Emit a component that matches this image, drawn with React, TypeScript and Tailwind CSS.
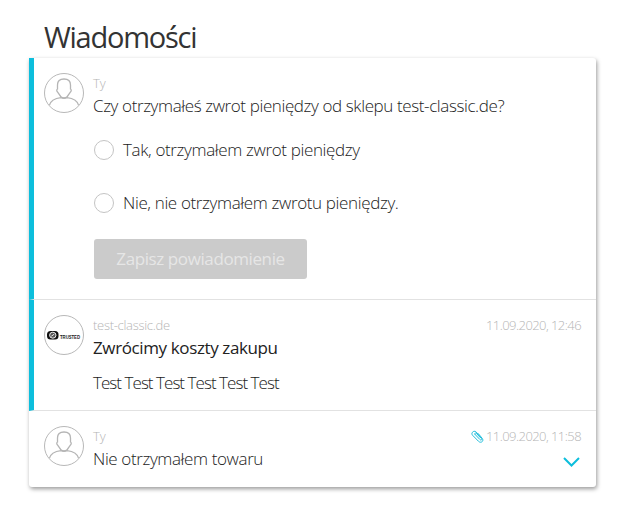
import type { ReactNode } from "react";
import { clsx } from "clsx";

interface MessageProps {
  avatar: ReactNode;
  children: ReactNode;
  active?: boolean;
  className?: string;
}

function Avatar({ children }: { children: ReactNode }) {
  return (
    <div className="flex h-10 w-10 shrink-0 items-center justify-center overflow-hidden rounded-full border border-[#b8b8b8]">
      {children}
    </div>
  );
}

function UserAvatar() {
  return (
    <Avatar>
      <svg width="38" height="38" viewBox="0 0 38 38" fill="none" stroke="#b5b5b5" strokeWidth="1.300" className="shrink-0">
        <path d="M19 5c-4.800 0-6.500 2-6.500 6v4c-1 .5-.9 2-.2 2.700l3.400 4.800c1.800 2 4.800 2 6.600 0l3.400-4.800c.7-.7.8-2.200-.2-2.700v-4c0-4-1.700-6-6.500-6z" />
        <path d="M4.300 31.500c1.200-4.800 5-7.200 11.700-7.900 2 .9 4 .9 6 0 6.700.7 10.500 3.100 11.700 7.900" />
      </svg>
    </Avatar>
  );
}

function ShopAvatar() {
  return (
    <Avatar>
      <svg width="38" height="38" viewBox="0 0 38 38" className="shrink-0">
        <rect x="2" y="15" width="11.500" height="8.500" rx="3.500" fill="#111" />
        <ellipse cx="7.800" cy="19.200" rx="3.200" ry="3" fill="#555" stroke="#fff" strokeWidth="0.900" />
        <path d="M6.300 20.200l2.900-2" stroke="#fff" strokeWidth="0.900" />
        <text x="15" y="22.800" textLength="20" lengthAdjust="spacingAndGlyphs" fontSize="4.600" fontWeight="700" fontFamily="Liberation Sans, sans-serif" fill="#222">
          TRUSTED
        </text>
      </svg>
    </Avatar>
  );
}

function Message({ avatar, children, active, className }: MessageProps) {
  return (
    <div
      className={clsx(
        "flex border-l-[5px] pt-[15px] pr-[15px] pl-[10px]",
        active ? "border-l-[#0dbedc]" : "border-l-transparent",
        className
      )}
    >
      {avatar}
      <div className="ml-[9px] min-w-0 flex-1">{children}</div>
    </div>
  );
}

function Option({ label }: { label: string }) {
  return (
    <label className="flex h-5 items-center gap-[9px]">
      <span className="h-5 w-5 rounded-full border border-[#c4c4c4]" />
      <span className="whitespace-nowrap text-[17px] leading-5 tracking-[-0.360px]">{label}</span>
    </label>
  );
}

export default function App() {
  return (
    <div className="h-[525px] w-[617px] overflow-hidden bg-white pt-[18px] pl-[29px] font-['Open_Sans','Noto_Sans',sans-serif] font-light text-[#222]">
      <h1 className="ml-[15px] h-10 whitespace-nowrap text-[29px] leading-[38px] font-normal tracking-[-1.250px] text-[#333]">
        Wiadomości
      </h1>

      <div className="h-[429px] w-[567px] overflow-hidden rounded-[3px] rounded-tl-none shadow-[1px_2px_4px_rgba(0,0,0,0.4)]">
        {/* Refund question */}
        <Message avatar={<UserAvatar />} active className="h-[242px] border-b border-b-[#e2e2e2]">
          <div className="h-[22px] text-[13px] leading-5 text-[#b5b5b5]">Ty</div>
          <p className="whitespace-nowrap text-[17px] leading-[22px] tracking-[-0.390px]">
            Czy otrzymałeś zwrot pieniędzy od sklepu test-classic.de?
          </p>
          <div className="mt-[23px] ml-px flex flex-col gap-[33px]">
            <Option label="Tak, otrzymałem zwrot pieniędzy" />
            <Option label="Nie, nie otrzymałem zwrotu pieniędzy." />
          </div>
          <button className="mt-[26px] ml-px h-10 w-[213px] rounded-[3px] bg-[#cbcbcb] text-[17px] leading-10 font-medium tracking-[-0.400px] whitespace-nowrap text-[#e6e6e6]">
            Zapisz powiadomienie
          </button>
        </Message>

        {/* Shop reply */}
        <Message avatar={<ShopAvatar />} active className="h-[111px] border-b border-b-[#e2e2e2]">
          <div className="flex h-[22px] justify-between text-[13px] leading-5 whitespace-nowrap text-[#b5b5b5]">
            <span className="tracking-[-0.300px]">test-classic.de</span>
            <span className="tracking-[-0.560px]">11.09.2020, 12:46</span>
          </div>
          <h2 className="text-[17px] leading-[22px] font-normal tracking-[-0.380px]">Zwrócimy koszty zakupu</h2>
          <p className="mt-[13px] text-[17px] leading-[22px] tracking-[-0.950px]">
            Test Test Test Test Test Test
          </p>
        </Message>

        {/* Opening message */}
        <Message avatar={<UserAvatar />} className="h-[76px]">
          <div className="flex h-[22px] justify-between text-[13px] leading-5 whitespace-nowrap text-[#b5b5b5]">
            <span>Ty</span>
            <span className="flex h-5 items-center gap-[2px]">
              <svg width="13" height="13" viewBox="0 0 13 13" fill="none" stroke="#22bddb" strokeWidth="1" strokeLinecap="round">
                <path d="M4 4.400l5 5.200c1.100 1.100 2.400-.1 1.400-1.200L5.200 2C3.100-.2-.6 2.900 1.500 5.200l5.900 6c2.700 2.700 6-.4 3.700-3L7.300 3.600" />
                <path d="M4 4.400c-.8-1 .4-2 1.300-1.100l4 4.300" />
              </svg>
              <span className="tracking-[-0.560px]">11.09.2020, 11:58</span>
            </span>
          </div>
          <div className="flex h-[22px] justify-between">
            <p className="text-[17px] leading-[22px] tracking-[-0.380px]">Nie otrzymałem towaru</p>
            <svg width="18" height="22" viewBox="0 0 18 22" fill="none" stroke="#0dbedc" strokeWidth="2">
              <path d="M1 10l7.500 7.500L16 10" />
            </svg>
          </div>
        </Message>
      </div>
    </div>
  );
}
